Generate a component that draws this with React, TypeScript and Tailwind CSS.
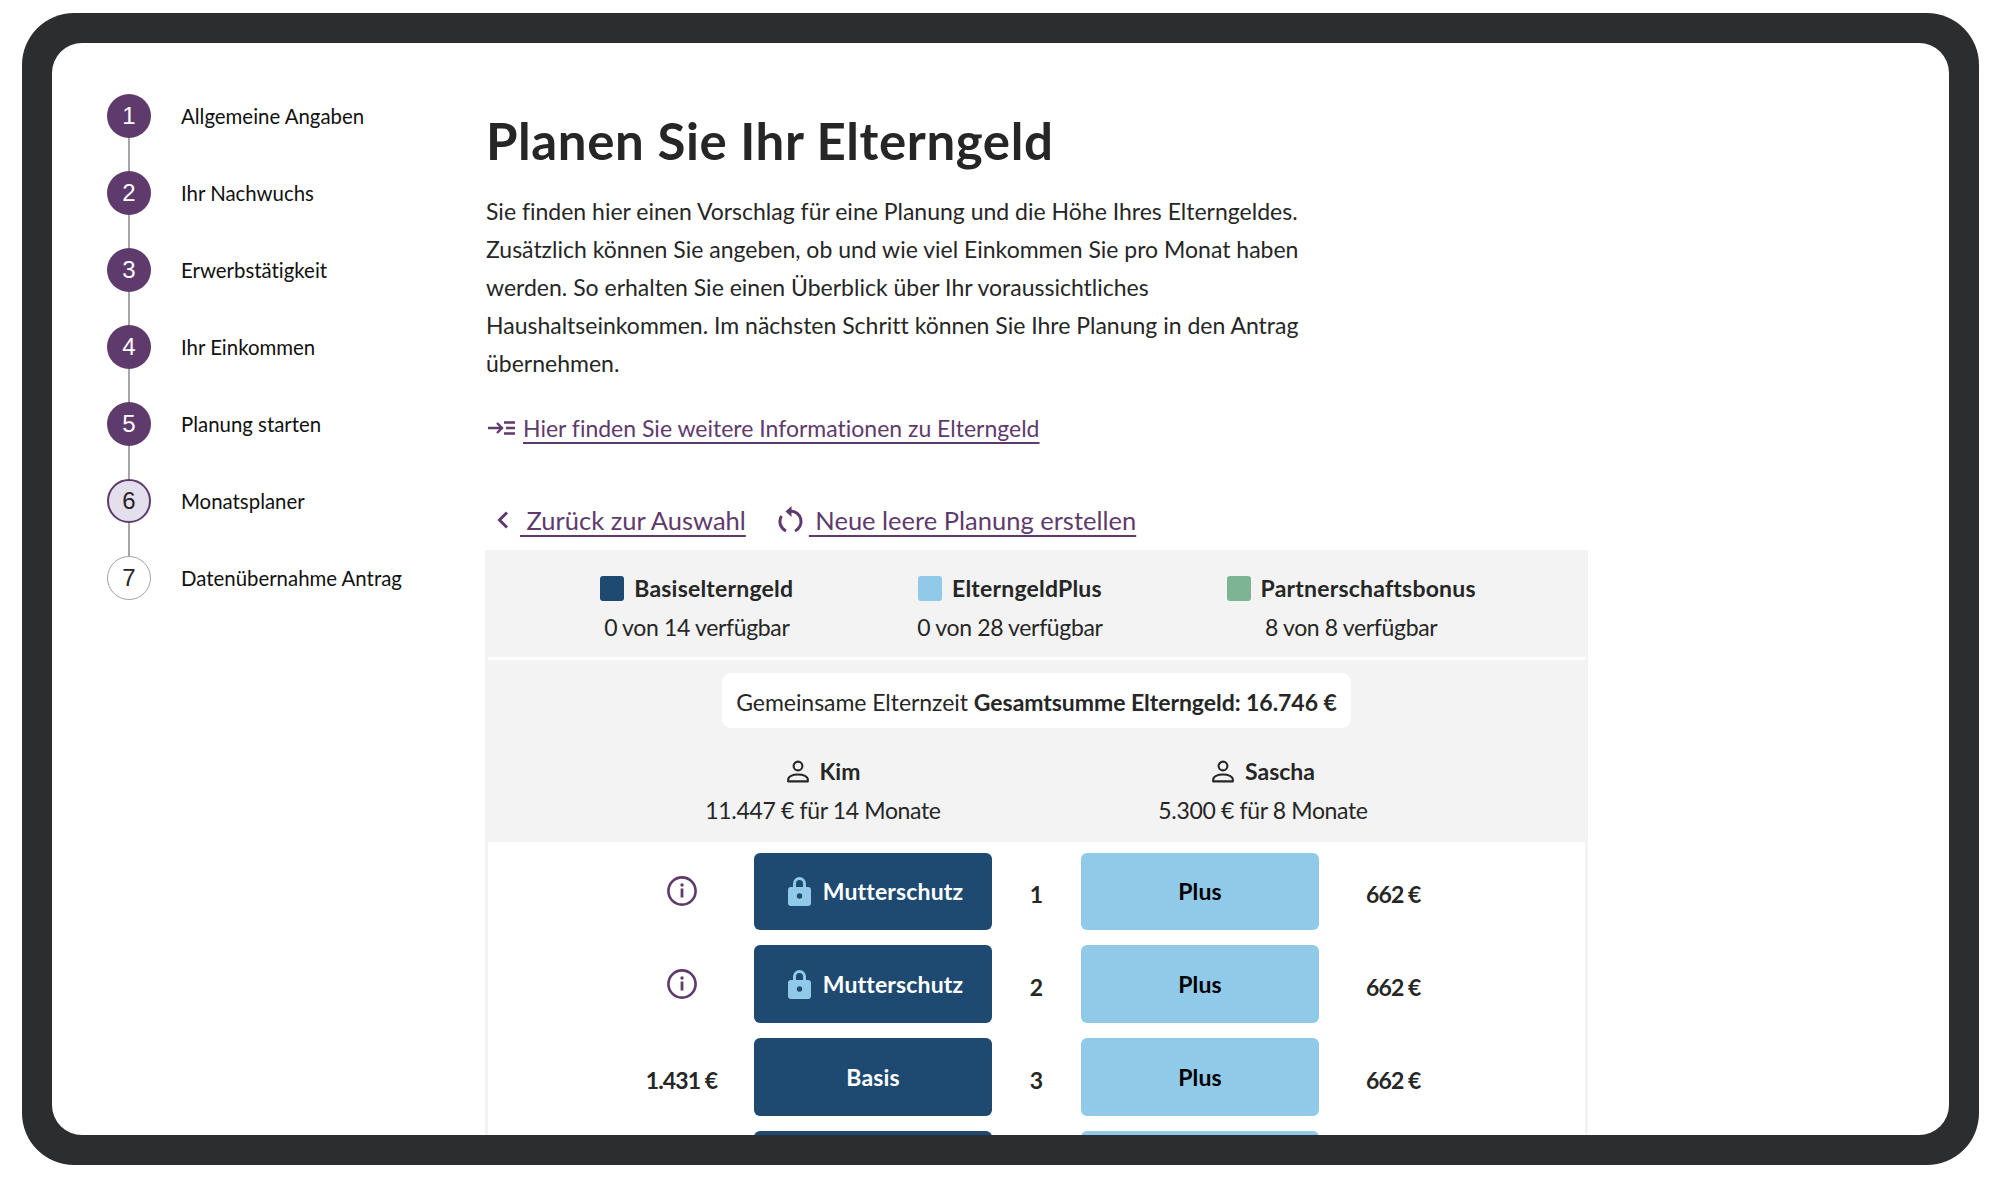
const steps = [
  { n: 1, label: "Allgemeine Angaben", state: "done" },
  { n: 2, label: "Ihr Nachwuchs", state: "done" },
  { n: 3, label: "Erwerbstätigkeit", state: "done" },
  { n: 4, label: "Ihr Einkommen", state: "done" },
  { n: 5, label: "Planung starten", state: "done" },
  { n: 6, label: "Monatsplaner", state: "current" },
  { n: 7, label: "Datenübernahme Antrag", state: "todo" },
];

// the fourth row is cut off by the frame, only its top edge shows
const rows = [
  { id: 1, left: "info", month: "1", basis: "Mutterschutz", locked: true, plus: "Plus", right: "662 €" },
  { id: 2, left: "info", month: "2", basis: "Mutterschutz", locked: true, plus: "Plus", right: "662 €" },
  { id: 3, left: "1.431 €", month: "3", basis: "Basis", locked: false, plus: "Plus", right: "662 €" },
  { id: 4, left: "", month: "", basis: "", locked: false, plus: "", right: "" },
];

function Stepper() {
  return (
    <nav className="w-[434px] shrink-0 pl-[55px] pt-[51px]">
      {steps.map((step, i) => (
        <div key={step.n} className="flex gap-[30px]">
          <div className="flex w-[44px] flex-col items-center">
            {step.state === "done" && (
              <div className="flex h-[44px] w-[44px] items-center justify-center rounded-full bg-[#5f3a6d] font-['Liberation_Sans',sans-serif] text-[24px] text-white">
                {step.n}
              </div>
            )}
            {step.state === "current" && (
              <div className="flex h-[44px] w-[44px] items-center justify-center rounded-full border-[2.5px] border-[#5f3a6d] bg-[#e3dfec] font-['Liberation_Sans',sans-serif] text-[24px] text-[#262626]">
                {step.n}
              </div>
            )}
            {step.state === "todo" && (
              <div className="flex h-[44px] w-[44px] items-center justify-center rounded-full border border-[#a3a3a3] bg-white font-['Liberation_Sans',sans-serif] text-[24px] text-[#262626]">
                {step.n}
              </div>
            )}
            {i < steps.length - 1 && <div className="h-[33px] w-[2px] bg-[#a6a6a6]" />}
          </div>
          <div className="flex h-[44px] items-center text-[20.4px] text-[#111111]">{step.label}</div>
        </div>
      ))}
    </nav>
  );
}

function PersonIcon() {
  return (
    <svg width="24" height="24" viewBox="0 0 24 24" fill="none" stroke="#262626" strokeWidth="2.1">
      <circle cx="12" cy="7" r="4.4" />
      <path d="M2.2 22.4v-2c0-3 4.4-4.9 9.8-4.9s9.8 1.900 9.8 4.9v2z" strokeLinejoin="round" />
    </svg>
  );
}

function InfoIcon() {
  return (
    <svg width="32" height="32" viewBox="0 0 32 32" fill="none">
      <circle cx="16" cy="16" r="13.6" stroke="#5f3a6d" strokeWidth="2.6" />
      <circle cx="16" cy="10" r="1.7" fill="#5f3a6d" />
      <rect x="14.6" y="13.5" width="2.8" height="9" fill="#5f3a6d" />
    </svg>
  );
}

function LockIcon() {
  return (
    <svg width="23" height="29" viewBox="0 0 23 29">
      <path d="M6.500 11V6.500a5 5 0 0 1 10 0V11" fill="none" stroke="#90cae8" strokeWidth="3" />
      <path
        fillRule="evenodd"
        d="M3 10h17a3 3 0 0 1 3 3v13a3 3 0 0 1-3 3H3a3 3 0 0 1-3-3V13a3 3 0 0 1 3-3zm8.500 6.300a2.700 2.700 0 1 0 0 5.400a2.700 2.700 0 0 0 0-5.400z"
        fill="#90cae8"
      />
    </svg>
  );
}

function LegendItem({ color, name, sub }: { color: string; name: string; sub: string }) {
  return (
    <div className="flex flex-col items-center">
      <div className="flex items-center gap-[10px]">
        <span className={color} />
        <span className="text-[23px] font-bold tracking-[0.2px]">{name}</span>
      </div>
      <div className="mt-[5px] text-[23px] tracking-[-0.35px]">{sub}</div>
    </div>
  );
}

function Person({ name, sub, width }: { name: string; sub: string; width: string }) {
  return (
    <div className={width}>
      <div className="flex items-center justify-center gap-[10px]">
        <PersonIcon />
        <span className="text-[23px] font-bold">{name}</span>
      </div>
      <div className="mt-[5px] text-center text-[23px] tracking-[-0.35px]">{sub}</div>
    </div>
  );
}

export default function App() {
  return (
    <div className="h-[1178px] w-[2001px] overflow-hidden bg-white pl-[22px] pt-[13px] font-['Lato',sans-serif] text-[#262626] [font-variant-ligatures:none]">
      <div className="h-[1152px] w-[1957px] rounded-[52px] bg-[#2c2d2f] p-[30px]">
        <div className="flex h-full overflow-hidden rounded-[30px] bg-white">
          <Stepper />
          <main className="w-[1103px] shrink-0">
            <h1 className="mt-[64px] text-[51px] font-bold leading-[68px] tracking-[0.6px]">Planen Sie Ihr Elterngeld</h1>
            <p className="mt-[17px] text-[23px] leading-[38px]">
              Sie finden hier einen Vorschlag für eine Planung und die Höhe Ihres Elterngeldes.
              <br />
              Zusätzlich können Sie angeben, ob und wie viel Einkommen Sie pro Monat haben
              <br />
              werden. So erhalten Sie einen Überblick über Ihr voraussichtliches
              <br />
              Haushaltseinkommen. Im nächsten Schritt können Sie Ihre Planung in den Antrag
              <br />
              übernehmen.
            </p>
            <div className="mt-[29px] flex items-center gap-[7px] text-[23px] text-[#5f3a6d]">
              <svg width="30" height="16" viewBox="0 0 30 16" fill="none" stroke="#5f3a6d" strokeWidth="2.4">
                <path d="M2 8h13M11 3l5 5-5 5" />
                <path d="M18 2.500h11M20 8h9M18 13.500h11" />
              </svg>
              <a className="underline decoration-2 underline-offset-[5px]">Hier finden Sie weitere Informationen zu Elterngeld</a>
            </div>
            <div className="mt-[55px] flex items-center text-[25.5px] text-[#5f3a6d]">
              <svg className="ml-[9px]" width="16" height="20" viewBox="0 0 16 20" fill="none" stroke="#5f3a6d" strokeWidth="3">
                <path d="M12 2.500 4.500 10l7.500 7.500" />
              </svg>
              <a className="ml-[9px] whitespace-pre underline decoration-2 underline-offset-[5px]"> Zurück zur Auswahl</a>
              <svg className="ml-[32px]" width="26" height="28" viewBox="0 0 26 28" fill="none" stroke="#5f3a6d" strokeWidth="3">
                <path d="M12.500 5A10.500 10.500 0 0 1 17 25" />
                <path d="M8 25A10.500 10.500 0 0 1 3.500 10" />
                <path d="M13.500 0v11l-6-5.500z" fill="#5f3a6d" stroke="none" />
              </svg>
              <a className="ml-[5px] whitespace-pre underline decoration-2 underline-offset-[5px]"> Neue leere Planung erstellen</a>
            </div>

            <section className="-ml-[1px] mt-[11px] w-[1103px] border-x-[3px] border-[#f3f3f3]">
              <div className="flex h-[107px] items-start justify-center gap-[124px] bg-[#f3f3f3] pl-[3px] pt-[21px]">
                <LegendItem color="h-[25px] w-[24px] rounded-[3px] bg-[#1e4a72]" name="Basiselterngeld" sub="0 von 14 verfügbar" />
                <LegendItem color="h-[25px] w-[24px] rounded-[3px] bg-[#90cae8]" name="ElterngeldPlus" sub="0 von 28 verfügbar" />
                <LegendItem color="h-[25px] w-[24px] rounded-[3px] bg-[#7db594]" name="Partnerschaftsbonus" sub="8 von 8 verfügbar" />
              </div>
              <div className="mt-[3px] h-[182px] bg-[#f3f3f3] pt-[13px]">
                <div className="mx-auto flex h-[55px] w-[629px] items-center justify-center rounded-[9px] bg-white pt-[4px] text-[23px] tracking-[-0.05px]">
                  <span>
                    Gemeinsame Elternzeit <b>Gesamtsumme Elterngeld: 16.746 €</b>
                  </span>
                </div>
                <div className="mt-[26px] flex pl-[205px]">
                  <Person name="Kim" sub="11.447 € für 14 Monate" width="w-[260px]" />
                  <Person name="Sascha" sub="5.300 € für 8 Monate" width="ml-[180px] w-[260px]" />
                </div>
              </div>
              <div className="flex flex-col gap-[15.3px] pt-[11px] text-[23px] font-bold">
                {rows.map((row) => (
                  <div key={row.id} className="grid h-[77.400px] grid-cols-[132px_238px_89px_238px_1fr] items-center pl-[134px]">
                    <div className="flex justify-center pr-[13px]">
                      {row.left === "info" ? <InfoIcon /> : <span className="pt-[6px] tracking-[-0.9px]">{row.left}</span>}
                    </div>
                    <div className="flex h-full items-center justify-center gap-[12px] rounded-[6px] bg-[#1e4a72] text-white">
                      {row.locked && (
                        <div className="pl-[5px]">
                          <LockIcon />
                        </div>
                      )}
                      <span className="tracking-[0.15px]">{row.basis}</span>
                    </div>
                    <div className="pt-[6px] text-center">{row.month}</div>
                    <div className="flex h-full items-center justify-center rounded-[6px] bg-[#90cae8] tracking-[0.15px] text-black">{row.plus}</div>
                    <div className="pl-[47px] pt-[6px] tracking-[-0.9px]">{row.right}</div>
                  </div>
                ))}
              </div>
            </section>
          </main>
        </div>
      </div>
    </div>
  );
}
